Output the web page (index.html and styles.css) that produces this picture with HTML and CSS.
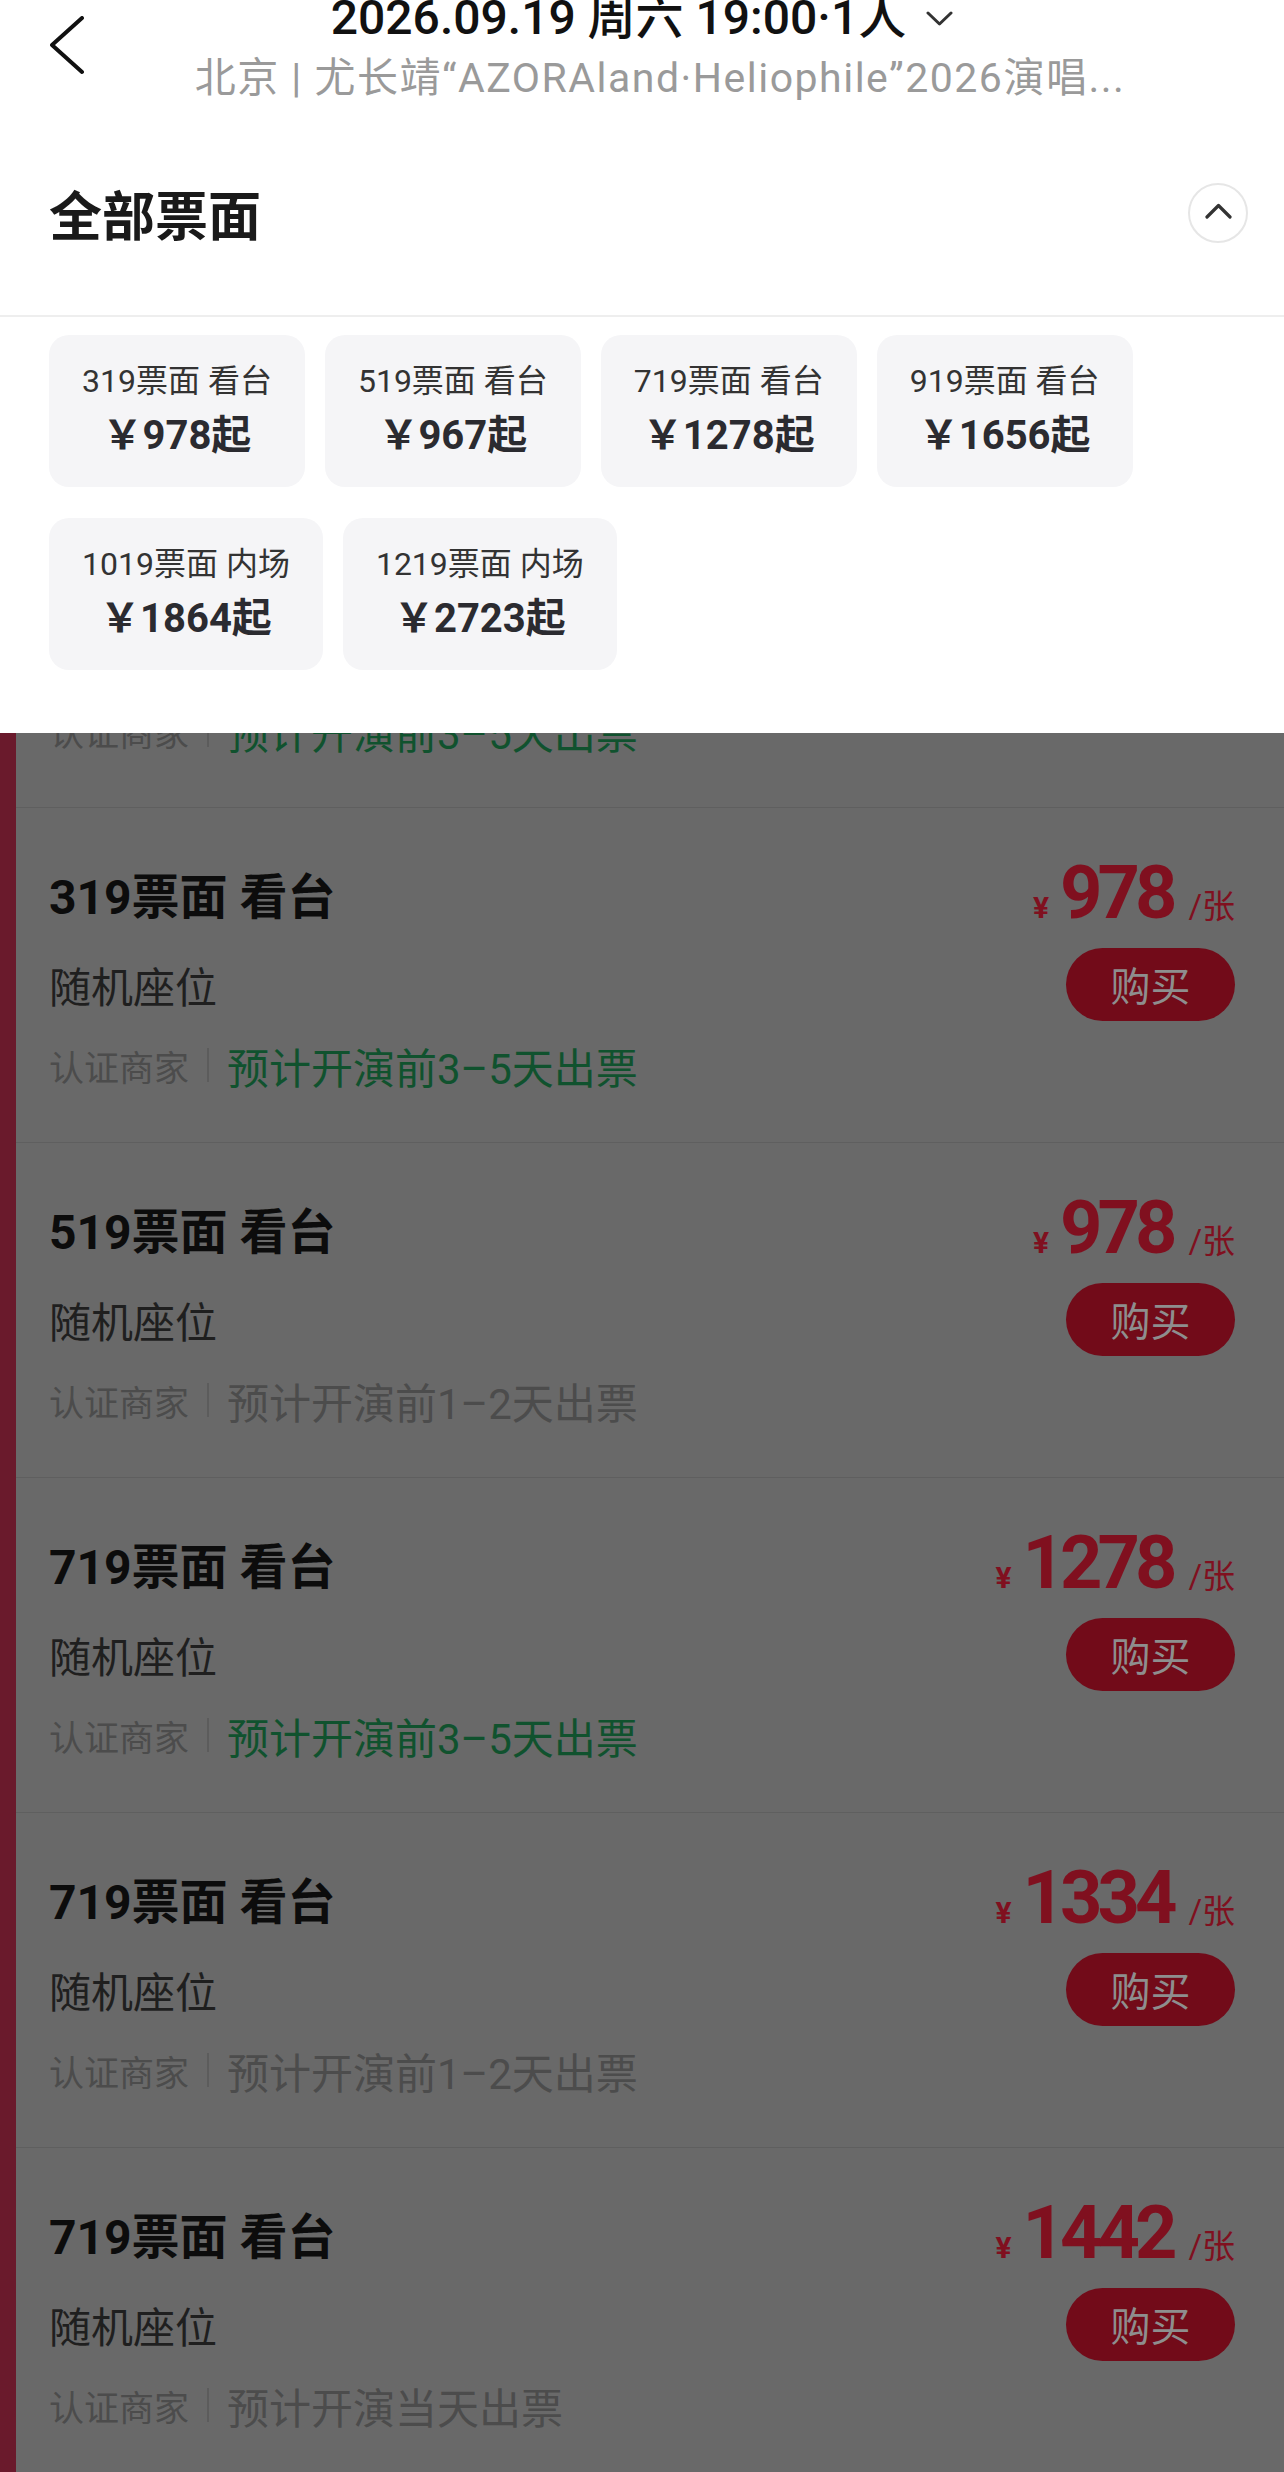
FILE: index.html
```html
<!DOCTYPE html>
<html lang="zh-CN">
<head>
  <meta charset="UTF-8">
  <title>选择票档</title>
  <meta name="viewport" content="width=device-width, initial-scale=1.0">
  <link rel="stylesheet" href="styles.css">
</head>
<body>
  <div class="sheet">
    <header class="top">
      <div class="back">
        <svg width="36" height="60" viewBox="0 0 36 60"><path d="M32 2 L2 29 L32 56" fill="none" stroke="#111" stroke-width="4" stroke-linecap="round" stroke-linejoin="round"/></svg>
      </div>
      <div class="top-info">
        <div class="top-title">
          <span>2026.09.19 周六 19:00·1人</span>
          <svg width="27" height="15" viewBox="0 0 27 15"><path d="M2 2 L13.5 13 L25 2" fill="none" stroke="#333" stroke-width="3" stroke-linecap="round" stroke-linejoin="round"/></svg>
        </div>
        <div class="top-sub">北京 | 尤长靖“AZORAland·Heliophile”2026演唱...</div>
      </div>
      <div></div>
    </header>

    <div class="section-head">
      <h2>全部票面</h2>
      <div class="fold-btn">
        <svg width="27" height="16" viewBox="0 0 27 16"><path d="M2 14 L13.5 2.5 L25 14" fill="none" stroke="#333" stroke-width="3.2" stroke-linecap="round" stroke-linejoin="round"/></svg>
      </div>
    </div>

    <div class="chips">
      <div class="chip"><div class="chip-name">319票面 看台</div><div class="chip-price">￥978起</div></div>
      <div class="chip"><div class="chip-name">519票面 看台</div><div class="chip-price">￥967起</div></div>
      <div class="chip"><div class="chip-name">719票面 看台</div><div class="chip-price">￥1278起</div></div>
      <div class="chip"><div class="chip-name">919票面 看台</div><div class="chip-price">￥1656起</div></div>
      <div class="chip"><div class="chip-name">1019票面 内场</div><div class="chip-price">￥1864起</div></div>
      <div class="chip"><div class="chip-name">1219票面 内场</div><div class="chip-price">￥2723起</div></div>
    </div>
  </div>

  <main class="list">
    <div class="ticket-tail">
      <div class="ticket-meta"><span class="seller">认证商家</span><i class="bar"></i><span class="eta eta-fast">预计开演前3–5天出票</span></div>
    </div>

    <div class="ticket">
      <div class="ticket-name">319票面 看台</div>
      <div class="ticket-price"><span class="yen">¥</span><span class="num">978</span><span class="unit">/张</span></div>
      <div class="ticket-seat">随机座位</div>
      <div class="buy">购买</div>
      <div class="ticket-meta"><span class="seller">认证商家</span><i class="bar"></i><span class="eta eta-fast">预计开演前3–5天出票</span></div>
    </div>

    <div class="ticket">
      <div class="ticket-name">519票面 看台</div>
      <div class="ticket-price"><span class="yen">¥</span><span class="num">978</span><span class="unit">/张</span></div>
      <div class="ticket-seat">随机座位</div>
      <div class="buy">购买</div>
      <div class="ticket-meta"><span class="seller">认证商家</span><i class="bar"></i><span class="eta">预计开演前1–2天出票</span></div>
    </div>

    <div class="ticket">
      <div class="ticket-name">719票面 看台</div>
      <div class="ticket-price"><span class="yen">¥</span><span class="num">1278</span><span class="unit">/张</span></div>
      <div class="ticket-seat">随机座位</div>
      <div class="buy">购买</div>
      <div class="ticket-meta"><span class="seller">认证商家</span><i class="bar"></i><span class="eta eta-fast">预计开演前3–5天出票</span></div>
    </div>

    <div class="ticket">
      <div class="ticket-name">719票面 看台</div>
      <div class="ticket-price"><span class="yen">¥</span><span class="num">1334</span><span class="unit">/张</span></div>
      <div class="ticket-seat">随机座位</div>
      <div class="buy">购买</div>
      <div class="ticket-meta"><span class="seller">认证商家</span><i class="bar"></i><span class="eta">预计开演前1–2天出票</span></div>
    </div>

    <div class="ticket">
      <div class="ticket-name">719票面 看台</div>
      <div class="ticket-price"><span class="yen">¥</span><span class="num">1442</span><span class="unit">/张</span></div>
      <div class="ticket-seat">随机座位</div>
      <div class="buy">购买</div>
      <div class="ticket-meta"><span class="seller">认证商家</span><i class="bar"></i><span class="eta">预计开演当天出票</span></div>
    </div>
  </main>
</body>
</html>
```

FILE: styles.css
```css
* {
  box-sizing: border-box;
}

body {
  margin: 0;
  width: 1284px;
  height: 2472px;
  overflow: hidden;
  font-family: Roboto, "Noto Sans CJK SC", sans-serif;
  background-color: #696969;
  color: #111;
}

/* white panel on top */
.sheet {
  background-color: #fff;
  height: 733px;
}

.top {
  display: grid;
  grid-template-columns: 120px 1fr 120px;
  height: 110px;
}

.back {
  padding: 16px 0 0 50px;
}

.top-info {
  display: flex;
  flex-direction: column;
  align-items: center;
}

.top-title {
  display: flex;
  align-items: center;
  gap: 20px;
  margin-top: -6px;
  height: 48px;
  font-size: 48px;
  line-height: 48px;
  font-weight: 500;
  color: #111;
  white-space: nowrap;
}

.top-sub {
  margin-top: 12px;
  padding-left: 36px;
  font-size: 41px;
  line-height: 48px;
  letter-spacing: 1.5px;
  color: #9a9a9a;
  white-space: nowrap;
}

.section-head {
  display: flex;
  justify-content: space-between;
  align-items: center;
  height: 207px;
  padding: 0 36px 0 49px;
  border-bottom: 2px solid #eeeeee;
}

.section-head h2 {
  margin: 0;
  font-size: 53px;
  font-weight: 700;
  color: #1a1a1a;
}

.fold-btn {
  width: 60px;
  height: 60px;
  border: 2px solid #e6e6e6;
  border-radius: 50%;
  display: flex;
  align-items: center;
  justify-content: center;
  padding-bottom: 4px;
}

.chips {
  display: flex;
  flex-wrap: wrap;
  gap: 31px 20px;
  padding: 18px 49px 0;
}

.chip {
  height: 152px;
  padding: 0 33px;
  background-color: #f5f5f7;
  border-radius: 20px;
  display: flex;
  flex-direction: column;
  align-items: center;
  justify-content: center;
  gap: 12px;
  white-space: nowrap;
}

.chip-name {
  font-size: 32px;
  line-height: 38px;
  color: #333;
}

.chip-price {
  font-size: 40px;
  line-height: 48px;
  font-weight: 700;
  color: #2b2b30;
}

/* dimmed list underneath */
.list {
  height: 1739px;
  overflow: hidden;
  border-left: 16px solid #6a1a2c;
  background-color: #696969;
}

/* bottom of the ticket hidden behind the panel */
.ticket-tail {
  height: 75px;
  overflow: hidden;
  padding-left: 33px;
  border-bottom: 1px solid #5f5f5f;
}

.ticket-tail .ticket-meta {
  height: 50px;
  margin-top: -28px;
}

.ticket {
  display: grid;
  grid-template-columns: 1fr auto;
  grid-template-rows: 70px 74px 50px;
  row-gap: 19px;
  height: 335px;
  padding: 50px 49px 53px 33px;
  border-bottom: 1px solid #5f5f5f;
  align-items: center;
}

.ticket-name {
  font-size: 48px;
  font-weight: 700;
  color: #0c0c0c;
}

.ticket-price {
  justify-self: end;
  display: flex;
  align-items: baseline;
  gap: 11px;
  color: #80101f;
  line-height: 1;
}

.ticket-price .yen {
  font-size: 30px;
  font-weight: 700;
}

.ticket-price .num {
  font-size: 74px;
  font-weight: 700;
  letter-spacing: -5px;
  margin-right: 5px;
}

.ticket-price .unit {
  font-size: 33px;
}

.ticket-seat {
  font-size: 42px;
  color: #1f1f1f;
}

.buy {
  justify-self: end;
  width: 169px;
  height: 73px;
  border-radius: 37px;
  background-color: #720b19;
  color: #8e8e8e;
  font-size: 40px;
  display: flex;
  align-items: center;
  justify-content: center;
}

.ticket-meta {
  grid-column: 1 / 3;
  display: flex;
  align-items: center;
}

.seller {
  font-size: 35px;
  color: #4c4c4c;
}

.bar {
  width: 2px;
  height: 34px;
  margin: 0 18px;
  background-color: #5c5c5c;
}

.eta {
  font-size: 42px;
  color: #4c4c4c;
}

.eta-fast {
  color: #10522e;
}
```
